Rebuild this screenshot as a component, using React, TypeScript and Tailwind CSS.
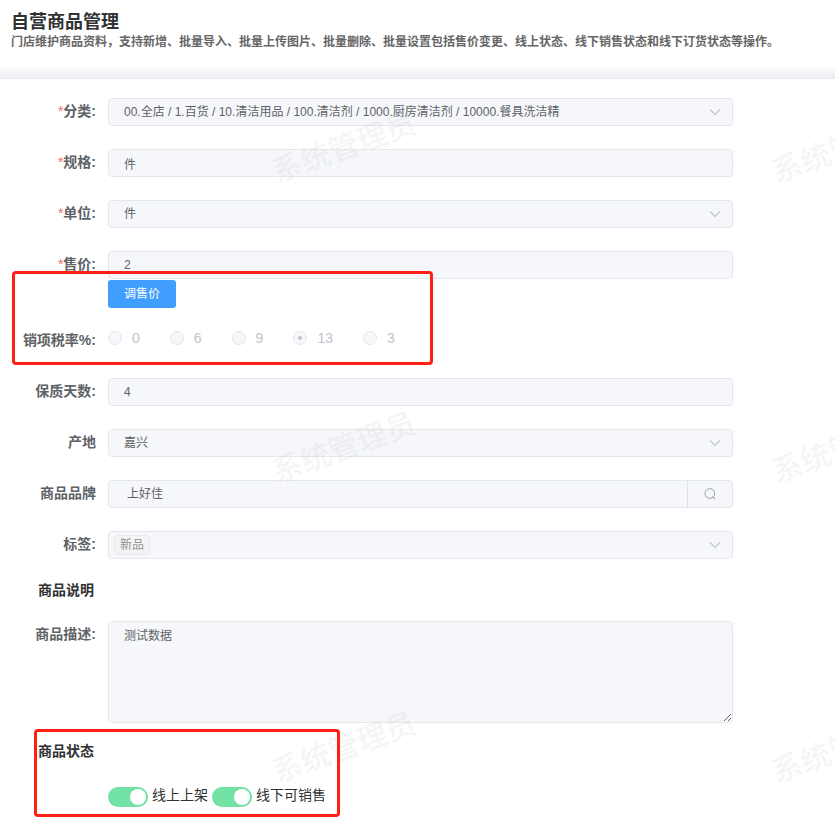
import type { ReactNode } from "react";

const fieldClass =
  "block w-full h-7 px-[15px] rounded border border-[#e4e7ed] bg-[#f5f7fa] text-xs text-[#606266] cursor-not-allowed";

const taxRates = ["0", "6", "9", "13", "3"];

function ArrowDown() {
  return (
    <svg
      className="absolute right-3 top-2 pointer-events-none"
      width="12"
      height="12"
      viewBox="0 0 12 12"
      fill="none"
      stroke="#c0c4cc"
      strokeWidth="1.1"
    >
      <path d="M1 3.5l5 5 5-5" />
    </svg>
  );
}

function FormItem({
  label,
  id,
  required,
  children,
}: {
  label: string;
  id: string;
  required?: boolean;
  children: ReactNode;
}) {
  return (
    <div className="flex items-start">
      <label
        htmlFor={id}
        className="w-[108px] shrink-0 pr-3 text-right text-sm leading-[26px] font-bold text-[#606266]"
      >
        {required && <span className="font-normal text-[#f56c6c]">*</span>}
        {label}
      </label>
      <div className="flex-1 min-w-0">{children}</div>
    </div>
  );
}

function SelectField({ id, value }: { id: string; value: string }) {
  return (
    <div className="relative">
      <select id={id} disabled className={`${fieldClass} appearance-none opacity-100`}>
        <option>{value}</option>
      </select>
      <ArrowDown />
    </div>
  );
}

function Switch({ label }: { label: string }) {
  return (
    <label className="flex items-start gap-1 text-sm leading-4 text-[#303133]">
      <input
        type="checkbox"
        role="switch"
        defaultChecked
        className="appearance-none flex items-center w-10 h-5 px-0.5 rounded-full bg-[#dcdfe6] checked:bg-[#71e2a3] checked:justify-end before:size-4 before:rounded-full before:bg-white"
      />
      {label}
    </label>
  );
}

function Watermark() {
  return (
    <div
      aria-hidden="true"
      className="absolute inset-0 overflow-hidden pointer-events-none select-none pl-[94px]"
    >
      <div className="-mt-0.5 grid grid-cols-[repeat(2,500px)] auto-rows-[300px]">
        {Array.from({ length: 6 }, (_, i) => (
          <div key={i} className="flex items-center justify-center">
            <span className="-rotate-20 text-3xl font-medium text-[#b4b4b4]/15">系统管理员</span>
          </div>
        ))}
      </div>
    </div>
  );
}

export default function App() {
  return (
    <div
      lang="zh-CN"
      className="relative min-h-screen overflow-hidden bg-white font-['Liberation_Sans','Noto_Sans_CJK_SC',sans-serif]"
    >
      <header className="px-[11px] pt-3 pb-4">
        <h1 className="text-lg leading-5 font-bold text-[#303133]">自营商品管理</h1>
        <p className="text-xs leading-5 font-bold text-[#666]">
          门店维护商品资料，支持新增、批量导入、批量上传图片、批量删除、批量设置包括售价变更、线上状态、线下销售状态和线下订货状态等操作。
        </p>
      </header>
      <div className="h-[11px] border-b border-[#e4e7ed] bg-linear-to-b from-[#f8f9fa] to-[#eceef0]" />

      <form className="pt-[19px] pr-[102px] pb-4">
        <div className="flex flex-col gap-[23px]">
          <FormItem label="分类:" id="category" required>
            <SelectField
              id="category"
              value="00.全店 / 1.百货 / 10.清洁用品 / 100.清洁剂 / 1000.厨房清洁剂 / 10000.餐具洗洁精"
            />
          </FormItem>
          <FormItem label="规格:" id="spec" required>
            <input id="spec" disabled defaultValue="件" className={fieldClass} />
          </FormItem>
          <FormItem label="单位:" id="unit" required>
            <SelectField id="unit" value="件" />
          </FormItem>
          <FormItem label="售价:" id="price" required>
            <input id="price" disabled defaultValue="2" className={fieldClass} />
            <button
              type="button"
              className="mt-px h-7 px-4 block rounded-[3px] bg-[#409eff] text-xs text-white"
            >
              调售价
            </button>
          </FormItem>

          <div className="flex items-start h-6" role="radiogroup" aria-labelledby="tax-label">
            <span
              id="tax-label"
              className="w-[108px] shrink-0 pr-3 text-right text-sm leading-[18px] font-bold text-[#606266]"
            >
              销项税率%:
            </span>
            <div className="flex gap-[30px]">
              {taxRates.map((rate) => (
                <label
                  key={rate}
                  className="flex items-center gap-2.5 text-sm leading-[14px] text-[#c0c4cc] cursor-not-allowed"
                >
                  <input
                    type="radio"
                    name="tax"
                    disabled
                    defaultChecked={rate === "13"}
                    className="appearance-none flex items-center justify-center size-3.5 rounded-full border border-[#e4e7ed] bg-[#f5f7fa] before:size-1 before:rounded-full checked:before:bg-[#c0c4cc]"
                  />
                  {rate}
                </label>
              ))}
            </div>
          </div>

          <FormItem label="保质天数:" id="shelf-life">
            <input id="shelf-life" disabled defaultValue="4" className={fieldClass} />
          </FormItem>
          <FormItem label="产地" id="origin">
            <SelectField id="origin" value="嘉兴" />
          </FormItem>
          <FormItem label="商品品牌" id="brand">
            <div className="flex h-7 rounded border border-[#e4e7ed] bg-[#f5f7fa]">
              <input
                id="brand"
                disabled
                defaultValue="上好佳"
                className="flex-1 min-w-0 px-[18px] text-xs text-[#606266] cursor-not-allowed"
              />
              <button
                type="button"
                aria-label="搜索"
                className="w-[45px] flex items-center justify-center border-l border-[#dcdfe6]"
              >
                <svg
                  width="12"
                  height="12"
                  viewBox="0 0 12 12"
                  fill="none"
                  stroke="#909399"
                  strokeWidth="0.9"
                >
                  <circle cx="5.8" cy="5.5" r="4.8" />
                  <path d="M9 9l2.2 2.2" />
                </svg>
              </button>
            </div>
          </FormItem>
          <FormItem label="标签:" id="tags">
            <div className="relative">
              <button
                id="tags"
                type="button"
                disabled
                aria-haspopup="listbox"
                className="flex items-center w-full h-7 px-[5px] rounded border border-[#e4e7ed] bg-[#f5f7fa] cursor-not-allowed"
              >
                <span className="h-5 px-[5px] rounded border border-[#e9e9eb] bg-[#f4f4f5] text-xs leading-[18px] text-[#909399]">
                  新品
                </span>
              </button>
              <ArrowDown />
            </div>
          </FormItem>

          <h2 className="pl-[38px] text-sm leading-4 font-bold text-[#303133]">商品说明</h2>
          <FormItem label="商品描述:" id="description">
            <textarea
              id="description"
              disabled
              defaultValue="测试数据"
              className="block w-full h-[102px] px-[15px] py-[5px] resize-y rounded border border-[#e4e7ed] bg-[#f5f7fa] text-xs leading-[18px] text-[#606266] cursor-not-allowed"
            />
          </FormItem>
        </div>

        <section className="flex flex-col gap-7 pt-5">
          <h2 className="pl-[38px] text-sm leading-4 font-bold text-[#303133]">商品状态</h2>
          <div className="flex gap-1 pl-[108px]">
            <Switch label="线上上架" />
            <Switch label="线下可销售" />
          </div>
        </section>
      </form>

      <Watermark />

      {/* highlight frames */}
      <div className="absolute left-3 top-[271px] w-[421px] h-[94px] rounded border-3 border-[#ff1f14] pointer-events-none" />
      <div className="absolute left-[34px] top-[729px] w-[306px] h-[88px] rounded border-3 border-[#ff1f14] pointer-events-none" />
    </div>
  );
}
